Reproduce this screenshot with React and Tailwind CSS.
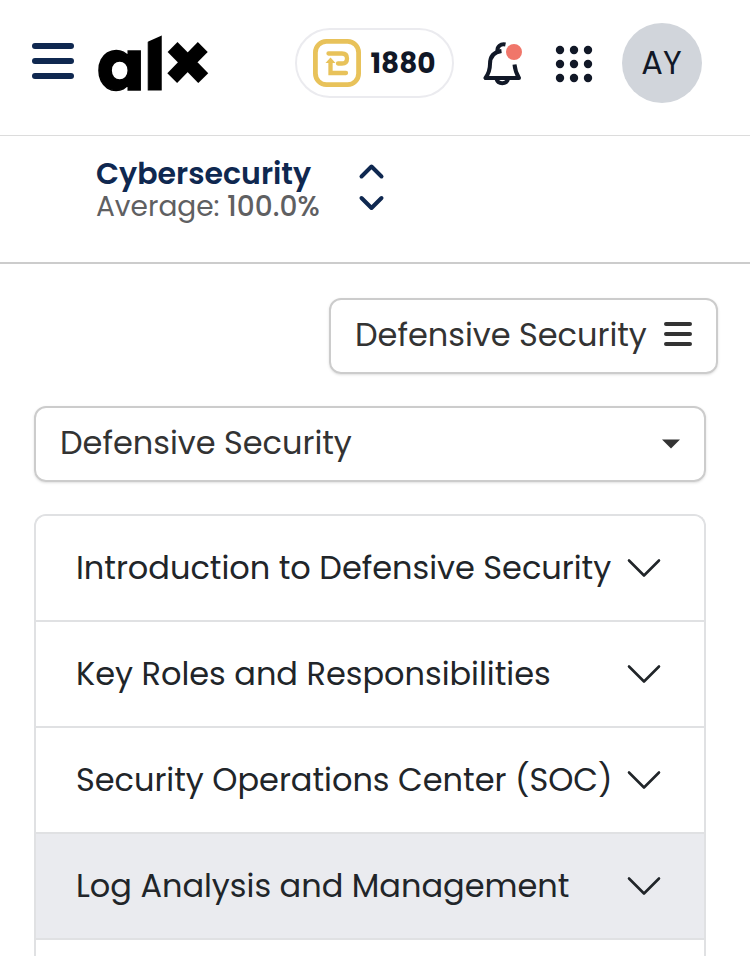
const modules = [
  { id: 1, title: "Introduction to Defensive Security" },
  { id: 2, title: "Key Roles and Responsibilities" },
  { id: 3, title: "Security Operations Center (SOC)" },
  { id: 4, title: "Log Analysis and Management", active: true },
  { id: 5, title: "" },
];

export default function App() {
  return (
    <div className="h-[956px] overflow-hidden bg-white font-['Poppins','Inter',sans-serif] text-[#212529]">
      <Header />
      <CourseSwitcher />

      <main className="pt-[34px]">
        <div className="flex justify-end pr-8">
          <button className="flex h-[76px] w-[389px] items-center justify-between rounded-xl border-2 border-[#ccc] pb-0.5 pl-6 pr-6 text-[32px] text-[#333] shadow-sm">
            <span className="whitespace-nowrap tracking-[-0.02px]">Defensive Security</span>
            <BarsIcon />
          </button>
        </div>

        <div className="ml-[34px] mt-8 w-[672px]">
          <button className="flex h-[76px] w-full items-center justify-between rounded-xl border-2 border-[#ccc] pb-0.5 pl-6 pr-6 text-[32px] text-[#333] shadow-sm">
            <span className="whitespace-nowrap tracking-[-0.02px]">Defensive Security</span>
            <svg className="mt-0.5" width="18" height="10" viewBox="0 0 18 10" fill="#333">
              <path d="M0 0.500h18L9 9.500z" />
            </svg>
          </button>

          <ul className="mt-8 overflow-hidden rounded-t-xl border-2 border-b-0 border-[#e0e1e3]">
            {modules.map((m) => (
              <ModuleRow key={m.id} {...m} />
            ))}
          </ul>
        </div>
      </main>
    </div>
  );
}

function Header() {
  return (
    <header className="flex h-[136px] items-start border-b border-[#dcdcdc] pl-8">
      <button className="mt-[43px] flex w-[42px] flex-col gap-[9px]" aria-label="Menu">
        <span className="h-1.5 rounded-full bg-[#0f2850]" />
        <span className="h-1.5 rounded-full bg-[#0f2850]" />
        <span className="h-1.5 rounded-full bg-[#0f2850]" />
      </button>

      <Logo />

      <div className="ml-[81px] mt-7 flex h-[70px] w-[159px] items-center rounded-full border-2 border-[#ebebef] pl-4">
        <CoinIcon />
        <span className="ml-[9.500px] mt-0.5 text-[28px] font-bold text-[#111827]">1880</span>
      </div>

      <button className="ml-[26px] mt-[38px]" aria-label="Notifications">
        <BellIcon />
      </button>

      <svg className="ml-[29px] mt-[45px]" width="38" height="38" viewBox="0 0 38 38" fill="#111827">
        {[5, 19, 33].map((y) => [5, 19, 33].map((x) => <circle key={`${x}-${y}`} cx={x} cy={y} r="4.2" />))}
      </svg>

      <div className="ml-[29px] mt-[23px] flex size-20 items-center justify-center rounded-full bg-[#d1d5db] pr-px text-[32px] text-[#111827]">
        AY
      </div>
    </header>
  );
}

function Logo() {
  return (
    <svg className="ml-5 mt-3 overflow-visible" width="120" height="112" viewBox="0 0 120 112" stroke="#000" fontWeight="700">
      <text x="3" y="78" fontSize="70" strokeWidth="1.5">a</text>
      <text x="49.500" y="78" fontSize="76" strokeWidth="1">l</text>
      <text x="93.800" y="77.500" fontSize="77" strokeWidth="1.800" textAnchor="middle">×</text>
      {/* bevel on top of the l */}
      <path d="M52 20h18v2.500L52 30.500z" fill="#fff" stroke="none" />
    </svg>
  );
}

function CourseSwitcher() {
  return (
    <section className="flex h-32 border-b-2 border-[#ccc] pl-24 pt-[21px]">
      <div className="w-[262px]">
        <h1 className="text-[30px] leading-[33px] font-semibold text-[#0f2850]">Cybersecurity</h1>
        <p className="mt-px whitespace-nowrap text-[28px] leading-[32px] text-[#5f6062]">
          Average: <span className="font-medium">100.0%</span>
        </p>
      </div>
      <svg className="mt-[5px]" width="28" height="50" viewBox="0 0 28 50" fill="none" stroke="#0f2850" strokeWidth="4" strokeLinecap="round" strokeLinejoin="round">
        <path d="M3.5 14.500 13.500 4.500l10 10" />
        <path d="M3.5 32l10 10 10-10" transform="translate(0 4)" />
      </svg>
    </section>
  );
}

function ModuleRow({ title, active }) {
  return (
    <li className={`flex h-[106px] items-center justify-between border-b-2 border-[#e0e1e3] pl-10 pr-[43px] ${active ? "bg-[#eaebef]" : "bg-white"}`}>
      <span className="whitespace-nowrap text-[32px] tracking-[-0.02px]">{title}</span>
      <svg width="34" height="20" viewBox="0 0 34 20" fill="none" stroke="#212529" strokeWidth="2.600" strokeLinecap="round" strokeLinejoin="round">
        <path d="M2 2.500 17 17.500 32 2.500" />
      </svg>
    </li>
  );
}

function BarsIcon() {
  return (
    <svg className="mb-0.5" width="28" height="26" viewBox="0 0 28 26" fill="none" stroke="#333" strokeWidth="4" strokeLinecap="round">
      <path d="M2 3h24M2 13h24M2 23h24" />
    </svg>
  );
}

function CoinIcon() {
  return (
    <svg width="48" height="48" viewBox="0 0 48 48" fill="none" stroke="#e8c25a" strokeWidth="4.800">
      <rect x="2.400" y="2.400" width="43.200" height="43.200" rx="11" />
      <path d="M15.500 14.500h13.500q5 0 5 5t-5 5h-4M33 34H17.500V23" strokeWidth="4.300" strokeLinecap="round" strokeLinejoin="miter" />
      <path d="M12.500 24l5-5.500 5 5.500z" fill="#e8c25a" stroke="none" />
    </svg>
  );
}

function BellIcon() {
  return (
    <svg width="46" height="50" viewBox="0 0 46 50" fill="none" stroke="#111827" strokeWidth="4" strokeLinejoin="round">
      <path d="M25.500 6.500c-5-1-8.500 2-8 6.500" />
      <path d="M21.500 13c-8 1-11.500 6-11.500 13 0 6-1 9-4.500 14h33.500c-3-5-4-8-4.500-13.500" />
      <path d="M16.500 41c1.500 5.500 10 5.500 11.500 0" />
      <circle cx="34" cy="14" r="8" fill="#f0766a" stroke="none" />
    </svg>
  );
}
